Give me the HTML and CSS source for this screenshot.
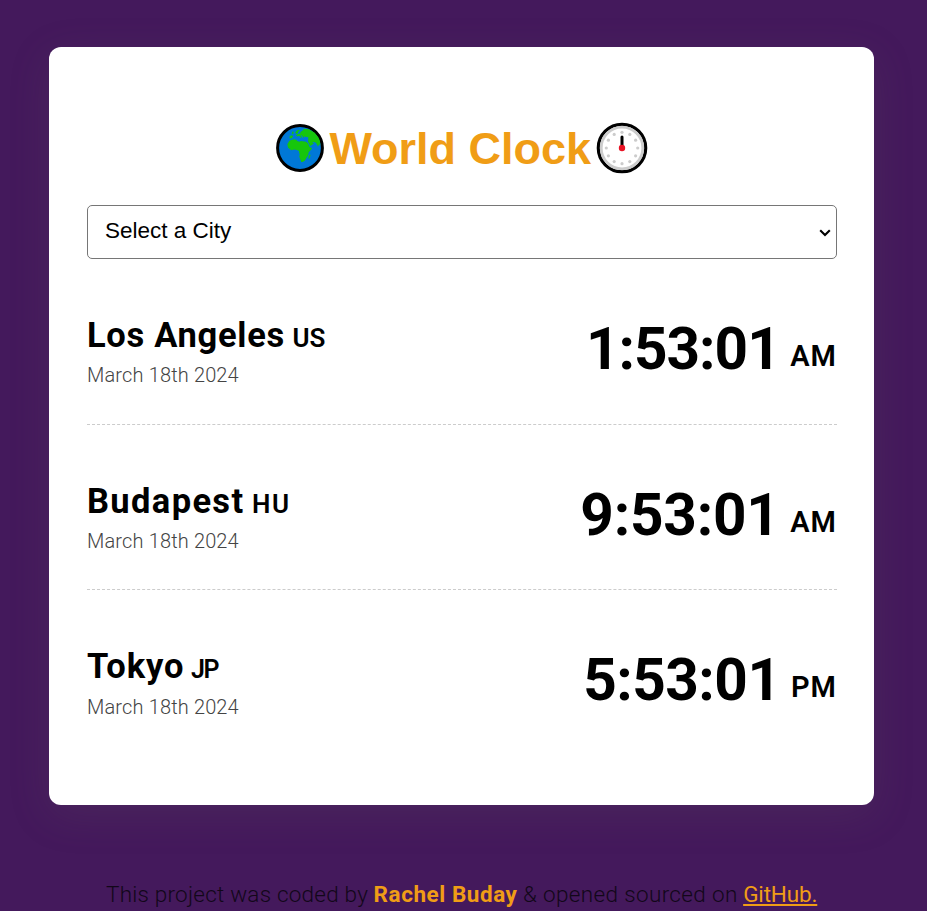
FILE: index.html
```html
<!DOCTYPE html>
<html lang="en">
<head>
<meta charset="utf-8">
<title>World Clock</title>
<link rel="stylesheet" href="styles.css">
</head>
<body>
<main class="container">
  <h1>
    <svg class="globe" width="50" height="50" viewBox="0 0 50 50" aria-hidden="true">
      <circle cx="25" cy="25" r="22.4" fill="#0078d7" stroke="#000" stroke-width="3"/>
      <g fill="#16c60c">
        <path d="M12.3 21.3l2-3.6 4.4-1.4 2.6.5.9 1.1 2.2.9 1.6-.8 5 .7 2 1.9 1.7 3.7 2.3.4-.7 1.9-2.6 2.7-.7 3.4-1.3 1.9-2 3.1-2.2 1.4-1.2-.1-2-5.3.5-2.5-.8-1.9.1-1.3-2.4-1-2.4-.4-2.9.6-3.3-2.4z"/>
        <path d="M33 18.7l2.3 4.2 3.7-2.4-1.8-1.5 1.6.1 2.2.6 2 4 1.2-2.4 1.1 1.3-.3-4.3-1.5-3.7-3.8-4.9-5.8-3.4-5-.5-1.3 1.8-2.1 1.5-.4 1.6-2.4.4-1.8 1.4 1.5 1 1.8-.8 2 2.6.6-1.2-1.4-2.1 1.7.7 1.5 2.3.7-1.5 2.2.5 1.8.2z"/>
        <path d="M14.7 13l2.6-.7.8 1.2-1.5 2-2.1-.2zM20.2 9.7l1.6-2.1 1.8-.9 1.2.5-1.7 1.8-.3 1.4-1.5.3zM17 9l1.4-.8.2 2.5-1.7.2z"/>
        <path d="M34.8 31.5l.7.5-.9 3.7-1.2-.3.2-2.3z"/>
      </g>
    </svg><span>World Clock</span><svg class="clock" width="52" height="52" viewBox="0 0 52 52" aria-hidden="true">
      <circle cx="26" cy="26" r="23.7" fill="#fff" stroke="#000" stroke-width="3.2"/>
      <circle cx="26" cy="26" r="20.8" fill="none" stroke="#ccc" stroke-width="2.8"/>
      <g fill="#ccc"><circle cx="26" cy="10.3" r="1.6"/><circle cx="33.8" cy="12.4" r="1.6"/><circle cx="39.6" cy="18.2" r="1.6"/><circle cx="41.7" cy="26" r="1.6"/><circle cx="39.6" cy="33.8" r="1.6"/><circle cx="33.8" cy="39.6" r="1.6"/><circle cx="26" cy="41.7" r="1.6"/><circle cx="18.2" cy="39.6" r="1.6"/><circle cx="12.4" cy="33.8" r="1.6"/><circle cx="10.3" cy="26" r="1.6"/><circle cx="12.4" cy="18.2" r="1.6"/><circle cx="18.2" cy="12.4" r="1.6"/></g>
      <path d="M26 15v9" stroke="#000" stroke-width="3" stroke-linecap="round"/>
      <circle cx="26" cy="26" r="3.2" fill="#e81224"/>
    </svg>
  </h1>
  <div class="picker">
    <select>
      <option>Select a City</option>
      <option>Los Angeles</option>
      <option>Budapest</option>
      <option>Tokyo</option>
    </select>
    <svg class="chevron" width="12" height="8" viewBox="0 0 12 8" aria-hidden="true"><path d="M1.2 1.2L6 6l4.8-4.8" fill="none" stroke="#000" stroke-width="2.1"/></svg>
  </div>
  <section class="cities">
    <article class="city los-angeles">
      <div><h2><span class="name">Los Angeles</span> <small>US</small></h2><div class="date">March 18th 2024</div></div>
      <div class="time"><span class="digits">1:53:01</span> <small>AM</small></div>
    </article>
    <article class="city budapest">
      <div><h2><span class="name">Budapest</span> <small>HU</small></h2><div class="date">March 18th 2024</div></div>
      <div class="time"><span class="digits">9:53:01</span> <small>AM</small></div>
    </article>
    <article class="city tokyo">
      <div><h2><span class="name">Tokyo</span> <small>JP</small></h2><div class="date">March 18th 2024</div></div>
      <div class="time"><span class="digits">5:53:01</span> <small>PM</small></div>
    </article>
  </section>
</main>
<footer><span class="coded">This project was coded by</span> <strong>Rachel Buday</strong> <span class="opened">&amp; opened sourced on</span> <a href="#">GitHub.</a></footer>
</body>
</html>
```
FILE: styles.css
```css
* { box-sizing: border-box; }

html { overflow: hidden; }

body {
  display: flow-root;
  margin: 0;
  height: 911px;
  background: #44195c;
  font-family: Roboto, "Noto Sans", sans-serif;
  color: #000;
}

.container {
  width: 825px;
  height: 758px;
  margin: 47px 0 0 49px;
  padding: 75px 37px 0 38px;
  background: #fff;
  border-radius: 12px;
  box-shadow: 0 10px 40px rgba(100, 83, 95, 0.2);
}

h1 {
  display: flex;
  align-items: center;
  justify-content: center;
  height: 52px;
  margin: 0 0 31px -1px;
  font: bold 45px/52px "Liberation Sans", sans-serif;
  color: #f09d16;
}

h1 span {
  margin: 0 4.5px 0 4px;
  padding-top: 2px;
}

.picker { position: relative; }

.chevron {
  position: absolute;
  right: 6px;
  top: 24px;
  pointer-events: none;
}

select {
  display: block;
  appearance: none;
  width: 750px;
  height: 54px;
  padding: 0 17px 3px;
  border: 1px solid #767676;
  border-radius: 5px;
  background-color: #fff;
  color: #000;
  font: 22.5px "Liberation Sans", sans-serif;
}

.city {
  display: flex;
  justify-content: space-between;
  height: 165.5px;
  padding-top: 56px;
  border-bottom: 1px dashed #ccc;
}

.city:last-child { border: 0; }

h2 {
  margin: -1px 0 0;
  font-size: 34.5px;
  line-height: 42px;
  font-weight: 700;
  white-space: nowrap;
}

.los-angeles .name { letter-spacing: 0.7px; }
.budapest .name { letter-spacing: 1.35px; }
.tokyo .name { letter-spacing: 0.9px; }

h2 small {
  font-size: 26px;
  font-weight: 600;
}

.los-angeles h2 small { margin-left: -1px; }
.budapest h2 small { letter-spacing: 1.5px; margin-left: -1px; }
.tokyo h2 small { letter-spacing: -1.5px; margin-left: -2px; font-size: 25px; }

.date {
  margin-top: 3px;
  font-size: 20px;
  line-height: 26px;
  font-weight: 300;
  letter-spacing: 0.15px;
  color: #444;
}

.time {
  padding-top: 1px;
  font-size: 58.5px;
  line-height: 66px;
  font-weight: 700;
  white-space: nowrap;
}

.los-angeles .digits { letter-spacing: -1px; }
.budapest .digits { letter-spacing: -0.2px; }
.tokyo .digits { letter-spacing: -0.5px; }

.time small {
  position: relative;
  top: -3px;
  margin-left: -4px;
  font-size: 29px;
  font-weight: 600;
  letter-spacing: 1px;
}

footer {
  margin: 75px 0 0 106px;
  font-size: 22.5px;
  line-height: 28px;
  font-weight: 300;
  color: #120719;
  white-space: nowrap;
}

.coded { letter-spacing: 0.22px; }
.opened { letter-spacing: 0.35px; }

footer strong {
  color: #f09d16;
  font-weight: 700;
  letter-spacing: 0.55px;
}

footer a {
  color: #f09d16;
  font-weight: 400;
  text-decoration-thickness: 2px;
  text-underline-offset: 2px;
  letter-spacing: -0.15px;
}
```
